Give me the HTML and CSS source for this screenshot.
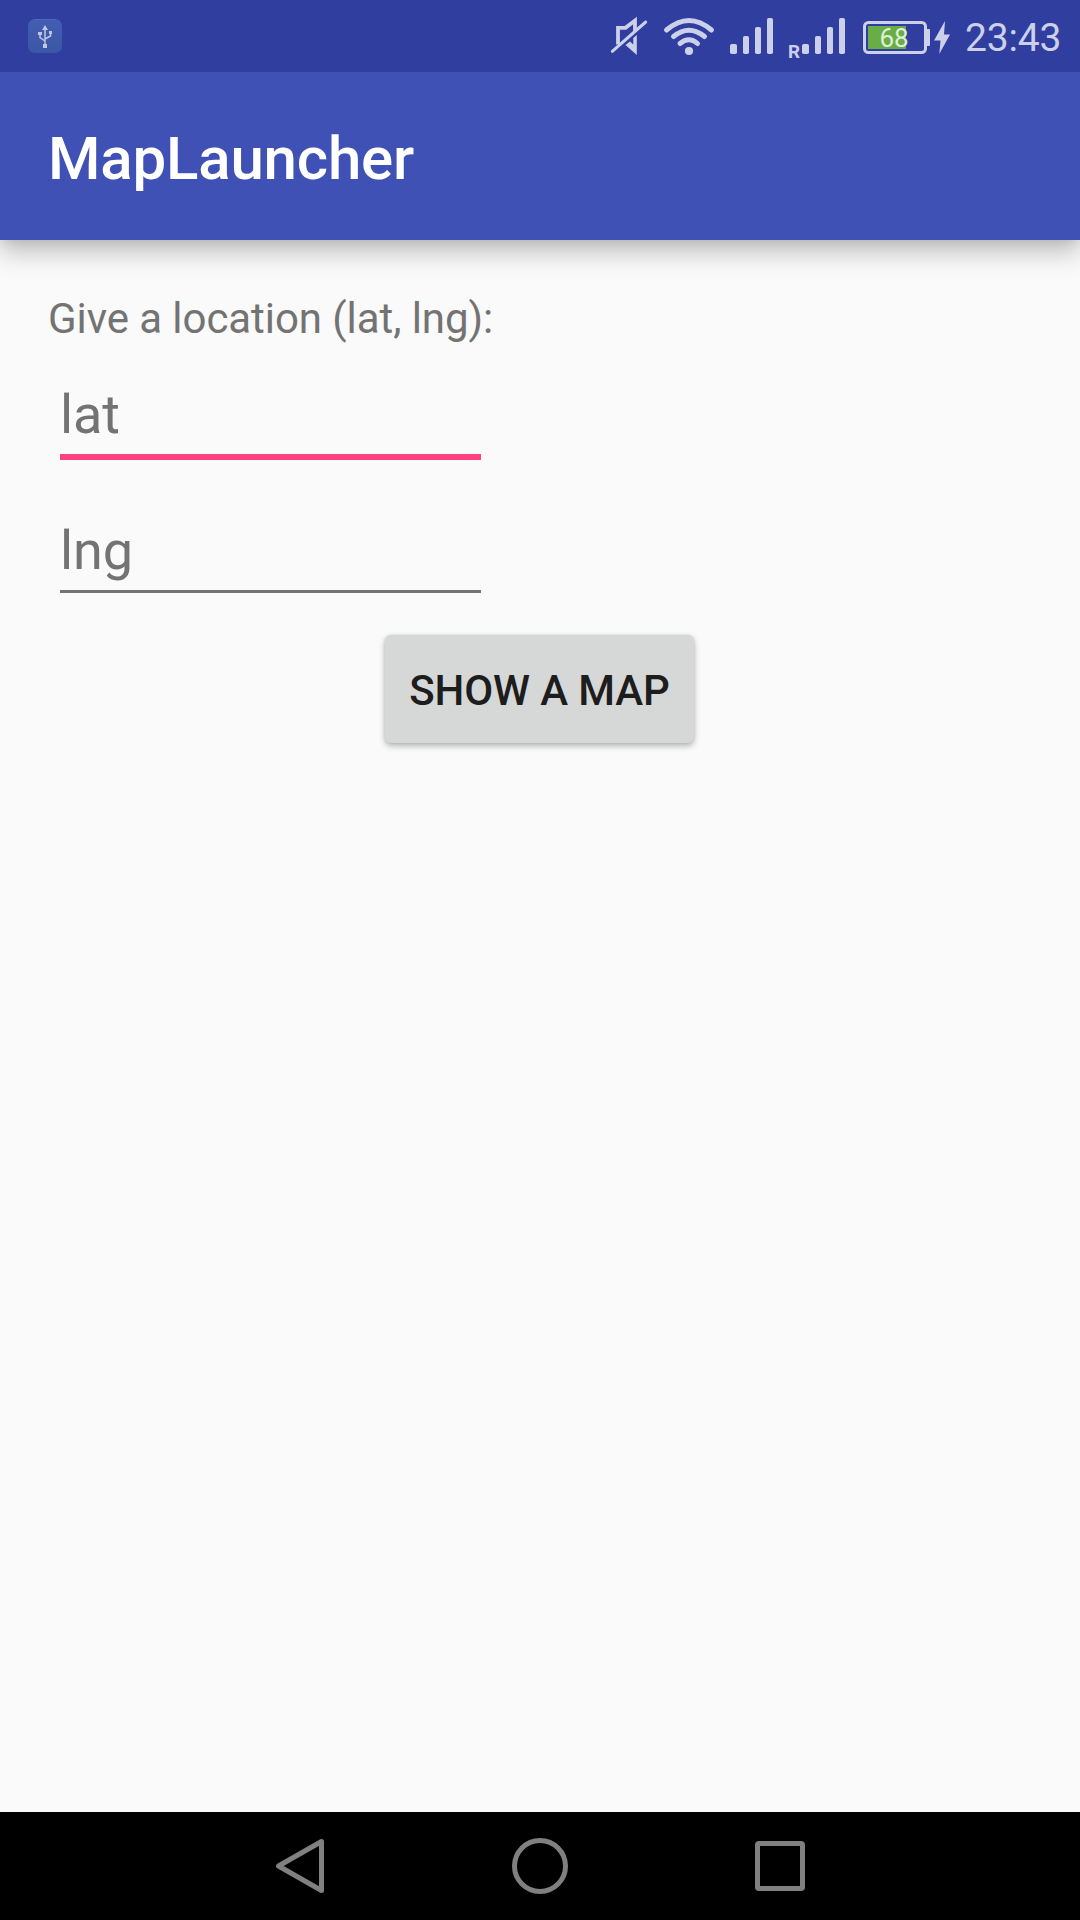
FILE: index.html
```html
<!DOCTYPE html>
<html lang="en">
<head>
<meta charset="utf-8">
<title>MapLauncher</title>
<link rel="stylesheet" href="styles.css">
</head>
<body>
<div class="screen">
  <div class="status-bar">
    <svg class="usb" width="80" height="72" viewBox="0 0 80 72">
      <defs><linearGradient id="usb-bg" x2="0" y2="1"><stop offset="0" stop-color="#435db2"/><stop offset="1" stop-color="#3c57a6"/></linearGradient></defs>
      <rect x="28" y="19" width="34" height="34" rx="7" fill="url(#usb-bg)"/>
      <path d="M34 19.5H56" stroke="#4c69b9" fill="none"/>
      <g fill="none" stroke="#bdc6e2" stroke-width="1.5"><path d="M45 28V45M40 34V37.5L45 41M50.5 33V36L45 39"/></g>
      <path d="M45 25L48 30H42ZM38 32h4v3h-4zM49 31h3v3h-3zM43 44h4v4h-4z" fill="#bdc6e2"/>
    </svg>
    <svg width="50" height="72" viewBox="605 0 50 72">
      <path d="M618 44.5V27.8H625.5L635 20.5V32" fill="none" stroke="#ccd0ea" stroke-width="3.8"/>
      <path d="M625.5 45L630 41.5L633.3 44.5V38L636.8 35V55Z" fill="#ccd0ea"/>
      <path d="M612.3 51.3L645.7 22" stroke="#ccd0ea" stroke-width="3" stroke-linecap="round"/>
    </svg>
    <svg width="67" height="72" viewBox="655 0 67 72">
      <g fill="none" stroke="#ccd0ea" stroke-width="5" stroke-linecap="round"><path d="M666.5 30Q689 11 711.5 30M673.5 36.5Q689 24 704.5 36.5M680 43.5Q689 36 697.5 43.5"/></g>
      <circle cx="689" cy="51" r="4.1" fill="#ccd0ea"/>
    </svg>
    <svg width="60" height="72" viewBox="722 0 60 72">
      <g fill="#ccd0ea"><rect x="730" y="44" width="7" height="10" rx="1.8"/><rect x="743" y="36" width="6" height="18" rx="1.8"/><rect x="755" y="27" width="6" height="27" rx="1.8"/><rect x="767" y="18" width="6" height="36" rx="1.8"/></g>
    </svg>
    <svg width="72" height="72" viewBox="782 0 72 72">
      <text class="roaming" x="788" y="58" textLength="12" lengthAdjust="spacingAndGlyphs">R</text>
      <g fill="#ccd0ea"><rect x="802" y="44" width="7" height="10" rx="1.8"/><rect x="815" y="36" width="6" height="18" rx="1.8"/><rect x="827" y="27" width="6" height="27" rx="1.8"/><rect x="839" y="18" width="6" height="36" rx="1.8"/></g>
    </svg>
    <svg width="110" height="72" viewBox="854 0 110 72">
      <rect x="864.5" y="22.5" width="61" height="30" rx="4" fill="none" stroke="#ccd0ea" stroke-width="3"/>
      <path d="M927 29H929Q930 29 930 30V45Q930 46 929 46H927Z" fill="#ccd0ea"/>
      <rect x="868" y="26" width="38" height="23" fill="#68ad45"/>
      <text class="level" x="894" y="47">68</text>
      <path d="M945 21L934 40.5H940.5L939.3 54L950 34.5H944Z" fill="#ccd0ea"/>
    </svg>
    <span class="clock">23:43</span>
  </div>
  <header class="app-bar"><h1 class="title">MapLauncher</h1></header>
  <main class="content">
    <p class="label">Give a location (lat, lng):</p>
    <input class="field field-active" type="text" placeholder="lat">
    <input class="field" type="text" placeholder="lng">
    <button class="show-map" type="button">SHOW A MAP</button>
  </main>
  <nav class="nav-bar">
    <svg width="60" height="60" viewBox="270 1836 60 60"><path d="M278.5 1866L321.5 1841.5V1890.5Z"/></svg>
    <svg width="60" height="60" viewBox="510 1836 60 60"><circle cx="540" cy="1866" r="25.5"/></svg>
    <svg width="60" height="60" viewBox="750 1836 60 60"><rect x="757.5" y="1843.5" width="45" height="45" rx="1.5"/></svg>
  </nav>
</div>
</body>
</html>
```
FILE: styles.css
```css
* {
  box-sizing: border-box;
}

body {
  margin: 0;
  font-family: Roboto, "Liberation Sans", sans-serif;
}

.screen {
  display: flex;
  flex-direction: column;
  width: 1080px;
  height: 1920px;
  background: #fafafa;
  overflow: hidden;
}

svg {
  display: block;
  flex: none;
}

/* Stays above the app bar's shadow */
.status-bar {
  position: relative;
  z-index: 1;
  display: flex;
  height: 72px;
  flex: none;
  background: #303f9f;
}

.usb {
  margin-right: auto;
}

.roaming {
  font-size: 19px;
  font-weight: 700;
  fill: #ccd0ea;
}

.level {
  font-size: 26px;
  text-anchor: middle;
  fill: #e0eed8;
}

.clock {
  width: 116px;
  padding: 2px 0 0 1px;
  font-size: 39px;
  line-height: 72px;
  letter-spacing: -0.2px;
  color: #ccd0ea;
  white-space: nowrap;
}

.app-bar {
  display: flex;
  align-items: center;
  flex: none;
  height: 168px;
  padding: 5px 48px 0;
  background: #3f51b5;
  box-shadow: 0 12px 24px rgba(0, 0, 0, 0.24), 0 0 12px rgba(0, 0, 0, 0.1);
}

.title {
  margin: 0;
  font-size: 60px;
  font-weight: 500;
  line-height: 72px;
  letter-spacing: -0.18px;
  color: #fff;
}

.content {
  display: flex;
  flex: 1;
  flex-direction: column;
  align-items: flex-start;
  padding: 49px 48px 0;
}

.label {
  margin: 0;
  font-size: 42px;
  line-height: 60px;
  letter-spacing: -0.07px;
  color: #737373;
}

.field {
  width: 421px;
  height: 84px;
  margin: 27px 0 0 12px;
  padding: 2px 0 0;
  border: 0;
  border-bottom: 3px solid #737373;
  border-radius: 0;
  outline: 0;
  background: none;
  font: 400 54px/64px Roboto, "Liberation Sans", sans-serif;
  letter-spacing: -0.1px;
  color: #212121;
}

.field::placeholder {
  color: #737373;
  opacity: 1;
}

.field-active {
  padding: 0 0 2px;
  border-bottom: 6px solid #ff4081;
}

.field-active + .field {
  margin-top: 49px;
}

.show-map {
  align-self: center;
  width: 309px;
  height: 108px;
  margin: 42px 1px 0 0;
  padding: 4px 0 0;
  border: 0;
  border-radius: 6px;
  background: #d6d8d7;
  box-shadow: 0 3px 6px rgba(0, 0, 0, 0.28), 0 0 3px rgba(0, 0, 0, 0.1);
  font: 500 42px/50px Roboto, "Liberation Sans", sans-serif;
  letter-spacing: -0.1px;
  color: #1d1d1d;
}

.nav-bar {
  display: flex;
  justify-content: center;
  align-items: center;
  gap: 180px;
  flex: none;
  height: 108px;
  background: #000;
}

.nav-bar svg {
  fill: none;
  stroke: #808080;
  stroke-width: 5;
  stroke-linejoin: round;
}
```
